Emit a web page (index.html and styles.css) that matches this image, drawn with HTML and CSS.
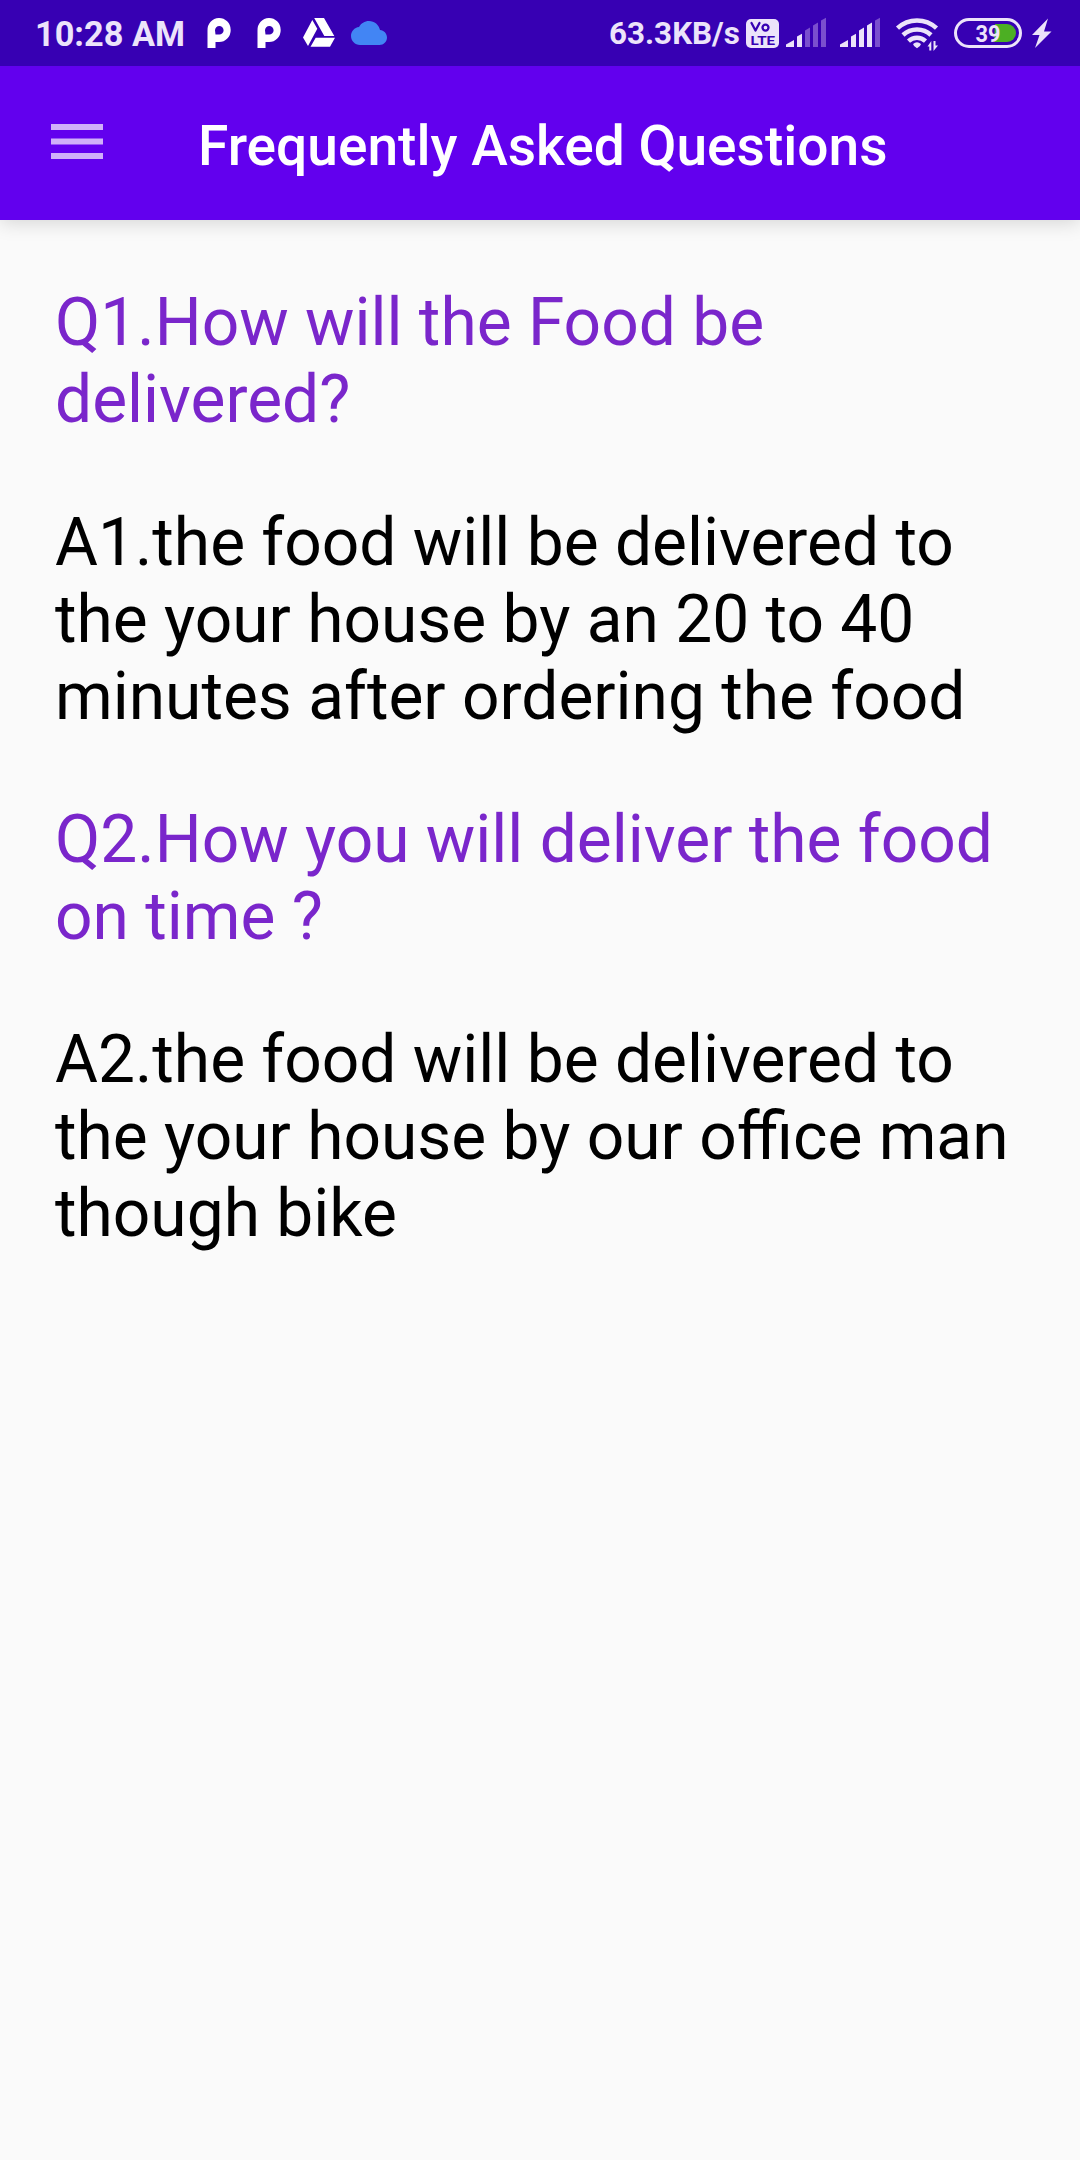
FILE: index.html
```html
<!DOCTYPE html>
<html lang="en">
<head>
<meta charset="utf-8">
<title>Frequently Asked Questions</title>
<link rel="stylesheet" href="styles.css">
</head>
<body>
<div class="status">
  <div class="status-left">
    <span class="clock">10:28 AM</span>
    <svg class="icon" width="50" height="66" viewBox="0 0 50 66"><path fill="#fff" fill-rule="evenodd" d="M7.500 48V30.500A11.600 12 0 1 1 19 42h-3.500v6ZM15.500 34.500h3.800a4.300 4.300 0 1 0-4.300-4.300Z"/></svg>
    <svg class="icon" width="50" height="66" viewBox="0 0 50 66"><path fill="#fff" fill-rule="evenodd" d="M7.500 48V30.500A11.600 12 0 1 1 19 42h-3.500v6ZM15.500 34.500h3.800a4.300 4.300 0 1 0-4.300-4.300Z"/></svg>
    <svg class="icon" width="50" height="66" viewBox="300 0 50 66"><path fill="#fff" d="M314.200 18h9.800l10.300 18h-10ZM312.300 20l5 8.800-9.300 17.200-5-8.500ZM315.700 37.800H335l-5 8.900h-19.500Z"/></svg>
    <svg class="icon" width="40" height="66" viewBox="350 0 40 66"><path fill="#4285f4" transform="translate(351 15) scale(1.5)" d="M19.350 10.040C18.670 6.590 15.640 4 12 4 9.110 4 6.600 5.640 5.350 8.040 2.340 8.360 0 10.910 0 14c0 3.310 2.690 6 6 6h13c2.760 0 5-2.240 5-5 0-2.640-2.050-4.780-4.650-4.960z"/></svg>
  </div>
  <div class="status-right">
    <span class="speed">63.3KB/s</span>
    <svg class="icon" width="40" height="66" viewBox="743 0 40 66"><rect x="746" y="19" width="33" height="29" rx="5" fill="#ece3fa"/><g fill="none" stroke="#3700b3" stroke-width="2.300" stroke-linecap="round" stroke-linejoin="round"><path d="M751.500 23l4 7.500 4-7.500"/><circle cx="765.500" cy="27.600" r="3"/></g><text class="lte" x="750.600" y="44.500" textLength="24.500" lengthAdjust="spacingAndGlyphs">LTE</text></svg>
    <svg class="icon" width="50" height="66" viewBox="783 0 50 66"><g fill="#ece3fa"><path d="M786 47v-2.500l8-4.500v7ZM797 47V36.500l5-2.700V47Z"/><path fill="#7a4fce" d="M805 47V30.500l5-3V47ZM813 47V25.500l5-3V47ZM821 47V20.500l5-2.700V47Z"/></g></svg>
    <svg class="icon" width="53" height="66" viewBox="833 0 53 66"><g fill="#ece3fa"><path d="M840 47v-2.500l8-4.500v7ZM851 47V36.500l5-2.700V47ZM859 47V30.500l5-3V47ZM867 47V25.500l5-3V47Z"/><path fill="#7a4fce" d="M875 47V20.500l5-2.700V47Z"/></g></svg>
    <svg class="icon" width="60" height="66" viewBox="886 0 60 66"><g fill="none" stroke="#ece3fa" stroke-width="4.500"><path d="M897.500 28.200a28.500 28.500 0 0 1 39 0M903 35a20.500 20.500 0 0 1 28 0M908.500 41.100a12.500 12.500 0 0 1 17 0"/></g><path fill="#ece3fa" d="M913 44q4-3.500 8 0-.5 2.500-4 4.300-3.500-1.800-4-4.300ZM927.500 46.500l3.800-5.500v9.500h-2v-4ZM933.500 41h2v4.500h2.500l-4.500 5.500Z"/></svg>
    <svg class="icon" width="83" height="66" viewBox="946 0 83 66"><rect x="955.500" y="19.500" width="65" height="27" rx="13.500" fill="none" stroke="#ece3fa" stroke-width="3"/><path fill="#4caf23" d="M995 24h12a9 9 0 0 1 0 18H994Z"/><text class="battery" x="975.500" y="41.500" textLength="25" lengthAdjust="spacingAndGlyphs">39</text></svg>
    <svg class="icon" width="51" height="66" viewBox="1029 0 51 66"><path fill="#ece3fa" d="M1048 18.500l-16 16.500h7.500l-4.500 13 16.500-16.500h-7.500Z"/></svg>
  </div>
</div>
<header class="appbar">
  <svg class="menu" width="52" height="36" viewBox="0 0 52 36"><path fill="#d0b0f9" d="M0 0h52v6H0ZM0 14.500h52v6H0ZM0 29h52v6H0Z"/></svg>
  <h1 class="title">Frequently Asked Questions</h1>
</header>
<main class="faq">
  <p class="question">Q1.How will the Food be delivered?</p>
  <p class="answer">A1.the food will be delivered to the your house by an 20 to 40 minutes after ordering the food</p>
  <p class="question">Q2.How you will deliver the food on time ?</p>
  <p class="answer">A2.the food will be delivered to the your house by our office man though bike</p>
</main>
</body>
</html>
```
FILE: styles.css
```css
body {
  margin: 0;
  min-height: 2160px;
  background: #fafafa;
  font-family: Roboto, sans-serif;
}
.status {
  position: relative;
  z-index: 1;
  display: flex;
  justify-content: space-between;
  height: 66px;
  background: #3700b3;
  color: #ece3fa;
}
.status-left, .status-right {
  display: flex;
  align-items: center;
}
.icon { display: block; flex: none; }
.clock {
  width: 165px;
  padding: 1px 0 0 35px;
  font-size: 34.3px;
  font-weight: 700;
  line-height: 66px;
  white-space: nowrap;
}
.speed {
  width: 134px;
  padding-top: 1px;
  font-size: 31.4px;
  font-weight: 700;
  line-height: 66px;
  white-space: nowrap;
}
.lte {
  font: 700 13.5px Roboto, sans-serif;
  fill: #3700b3;
}
.battery {
  font: 700 24px Roboto, sans-serif;
  fill: #ece3fa;
}
.appbar {
  display: flex;
  align-items: flex-start;
  height: 154px;
  background: #6200ee;
  box-shadow: 0 3px 18px rgba(0, 0, 0, 0.15);
}
.menu { margin: 58px 95px 0 51px; }
.title {
  margin: 0;
  padding-top: 48px;
  font-size: 55.1px;
  font-weight: 500;
  line-height: 64px;
  color: #fff;
}
.faq {
  display: flex;
  flex-direction: column;
  gap: 66px;
  padding: 64px 55px 0;
}
.question, .answer {
  margin: 0;
  font-size: 65.85px;
  line-height: 77px;
}
.question { color: #7a26cb; }
.answer { color: #000; }
```
